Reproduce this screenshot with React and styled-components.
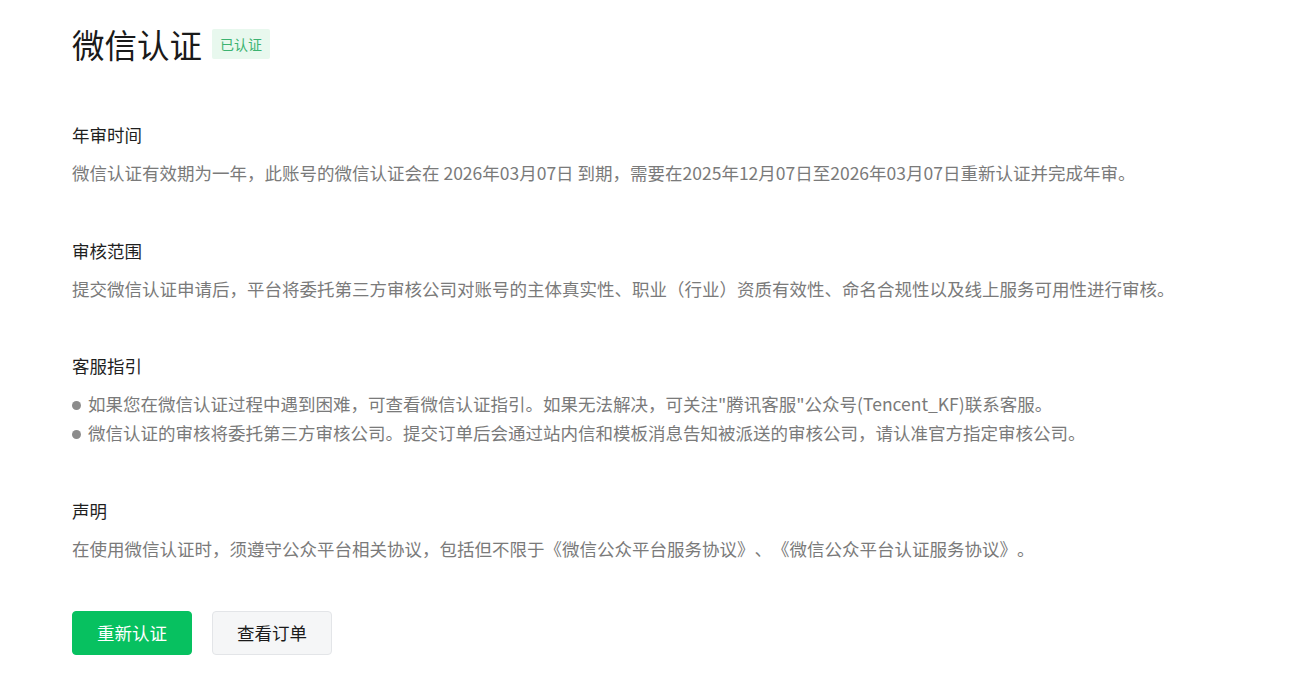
import styled, { createGlobalStyle } from "styled-components";

const GlobalStyle = createGlobalStyle`
  html, body {
    margin: 0;
    padding: 0;
    background: #ffffff;
  }
  body {
    font-family: "Noto Sans CJK SC", "Noto Sans", sans-serif;
    text-spacing-trim: space-all;
    -webkit-font-smoothing: antialiased;
  }
`;

const sections = [
  {
    title: "年审时间",
    lines: [
      "微信认证有效期为一年，此账号的微信认证会在 2026年03月07日 到期，需要在2025年12月07日至2026年03月07日重新认证并完成年审。",
    ],
  },
  {
    title: "审核范围",
    lines: [
      "提交微信认证申请后，平台将委托第三方审核公司对账号的主体真实性、职业（行业）资质有效性、命名合规性以及线上服务可用性进行审核。",
    ],
  },
  {
    title: "客服指引",
    bullets: true,
    lines: [
      "如果您在微信认证过程中遇到困难，可查看微信认证指引。如果无法解决，可关注\"腾讯客服\"公众号(Tencent_KF)联系客服。",
      "微信认证的审核将委托第三方审核公司。提交订单后会通过站内信和模板消息告知被派送的审核公司，请认准官方指定审核公司。",
    ],
  },
  {
    title: "声明",
    lines: [
      "在使用微信认证时，须遵守公众平台相关协议，包括但不限于《微信公众平台服务协议》、《微信公众平台认证服务协议》。",
    ],
  },
];

export default function App() {
  return (
    <>
      <GlobalStyle />
      <Page>
        <Header>
          <Title>微信认证</Title>
          <Badge>已认证</Badge>
        </Header>

        <Sections>
          {sections.map((s) => (
            <Section key={s.title}>
              <SectionTitle>{s.title}</SectionTitle>
              <Desc>
                {s.lines.map((l, i) => (
                  <Line key={i}>
                    {s.bullets && <Dot />}
                    {l}
                  </Line>
                ))}
              </Desc>
            </Section>
          ))}
        </Sections>

        <Actions>
          <Button $primary>重新认证</Button>
          <Button>查看订单</Button>
        </Actions>
      </Page>
    </>
  );
}

const Page = styled.div`
  padding: 21px 72px 0;
`;

const Header = styled.div`
  display: flex;
  align-items: center;
  gap: 10px;
  height: 46px;
`;

const Title = styled.h1`
  margin: 0;
  font-size: 32.5px;
  font-weight: 400;
  line-height: 46px;
  color: #1a1a1a;
`;

const Badge = styled.span`
  display: inline-flex;
  align-items: center;
  height: 30px;
  padding: 0 8px;
  border-radius: 2px;
  background: #e8f8ee;
  color: #3cb371;
  font-size: 14px;
`;

const Sections = styled.div`
  display: flex;
  flex-direction: column;
  gap: 48.5px;
  margin-top: 53px;
`;

const Section = styled.section`
  display: flex;
  flex-direction: column;
  gap: 9px;
`;

const SectionTitle = styled.h3`
  margin: 0;
  font-size: 17.5px;
  font-weight: 400;
  line-height: 29px;
  color: #1f1f1f;
`;

const Desc = styled.div`
  font-size: 17.5px;
  line-height: 29px;
  color: #7a7a7a;
`;

const Line = styled.p`
  margin: 0;
  white-space: nowrap;
`;

const Dot = styled.span`
  display: inline-block;
  width: 9px;
  height: 9px;
  border-radius: 50%;
  background: #8c8c8c;
  margin: 0 7px 0 0;
  vertical-align: 1px;
`;

const Actions = styled.div`
  display: flex;
  gap: 20px;
  margin-top: 48px;
`;

const Button = styled.button`
  width: 120px;
  height: 44px;
  border-radius: 4px;
  font-family: inherit;
  font-size: 17.5px;
  cursor: pointer;
  border: 1px solid ${(p) => (p.$primary ? "#07c160" : "#e3e5e8")};
  background: ${(p) => (p.$primary ? "#07c160" : "#f5f6f7")};
  color: ${(p) => (p.$primary ? "#ffffff" : "#1a1a1a")};
`;
